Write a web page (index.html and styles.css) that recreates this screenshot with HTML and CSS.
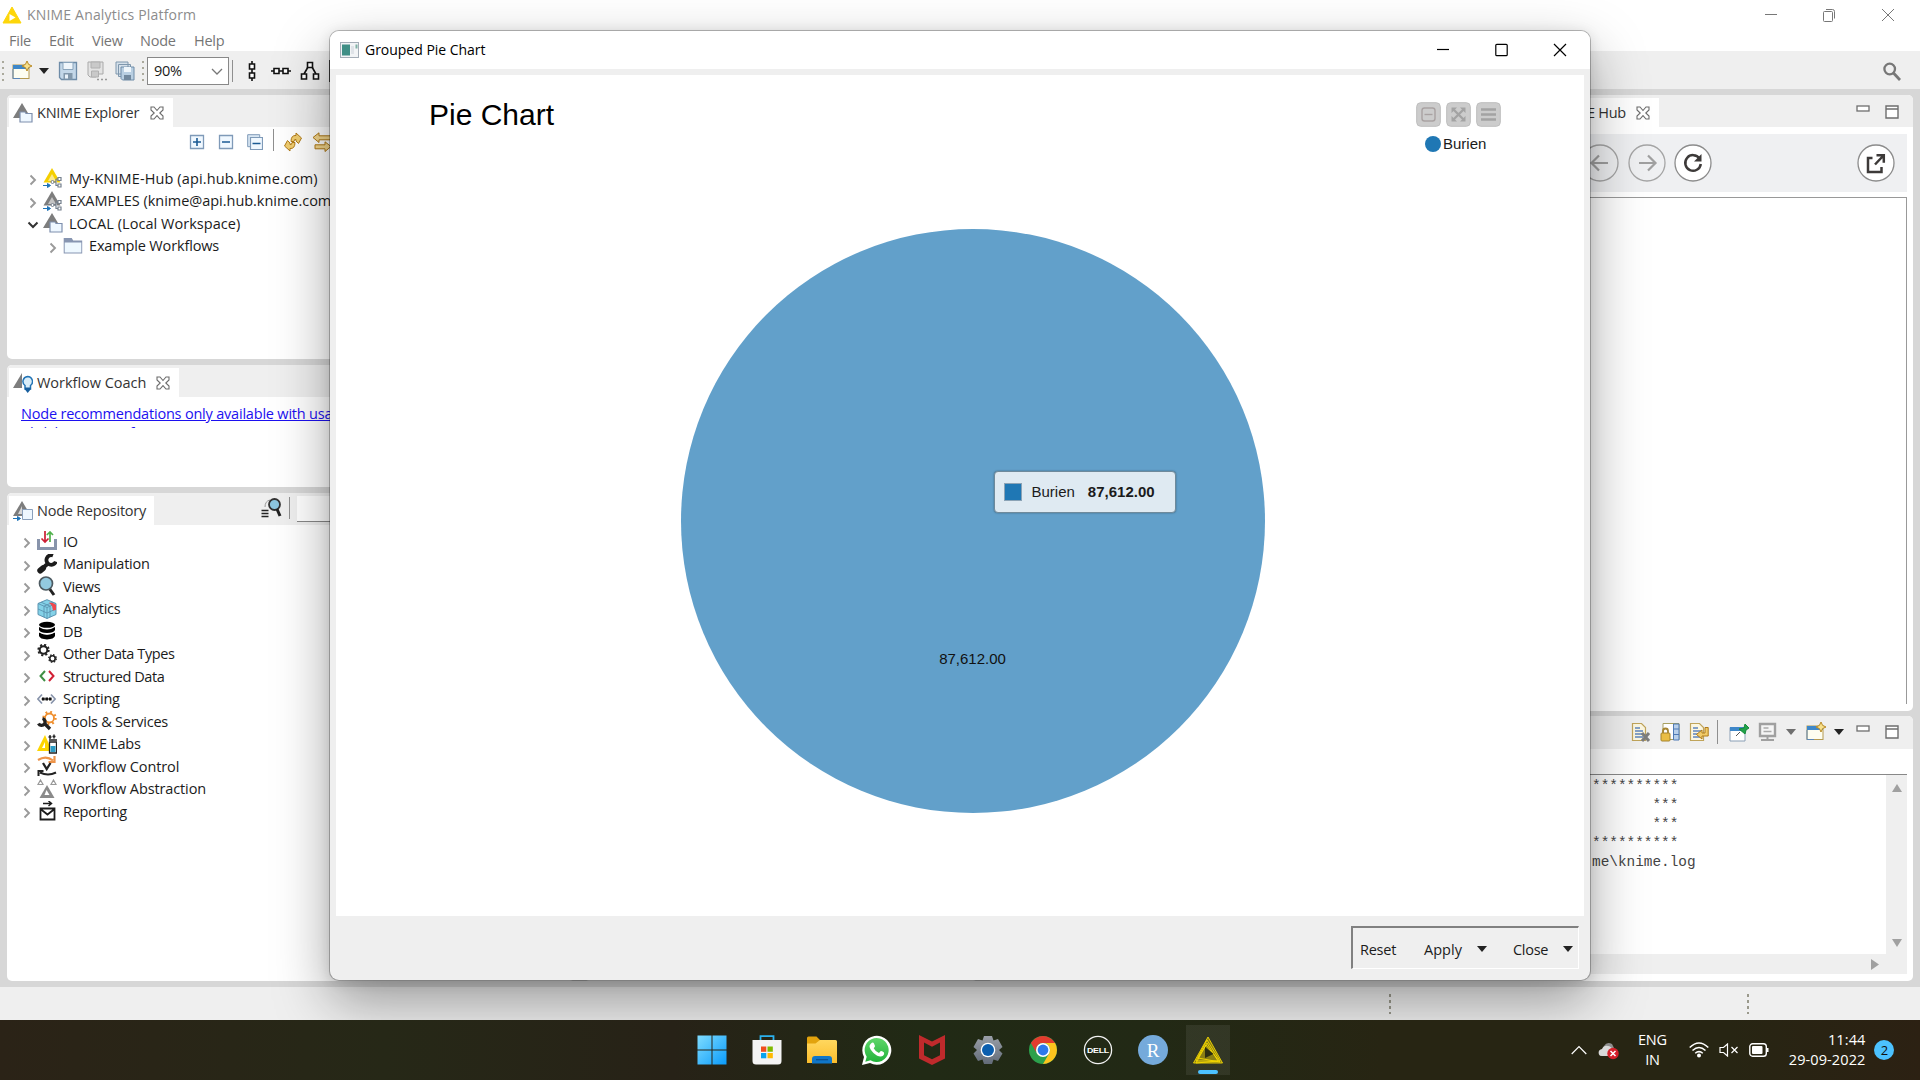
FILE: index.html
```html
<!DOCTYPE html>
<html lang="en">
<head>
<meta charset="utf-8">
<title>KNIME Analytics Platform</title>
<link rel="stylesheet" href="styles.css">
</head>
<body>
<svg class="defs" aria-hidden="true">
  <defs>
    <linearGradient id="gWin" x1="0" y1="0" x2="1" y2="1"><stop offset="0" stop-color="#7fdcff"/><stop offset="1" stop-color="#0a9bfb"/></linearGradient>
    <linearGradient id="gFolder" x1="0" y1="0" x2="0" y2="1"><stop offset="0" stop-color="#ffd75e"/><stop offset="1" stop-color="#fbbd2c"/></linearGradient>
    <linearGradient id="gWa" x1="0" y1="0" x2="0" y2="1"><stop offset="0" stop-color="#5fd66a"/><stop offset="1" stop-color="#22b33a"/></linearGradient>
    <linearGradient id="gGear" x1="0" y1="0" x2="0" y2="1"><stop offset="0" stop-color="#9a9fa8"/><stop offset="1" stop-color="#626b78"/></linearGradient>
    <symbol id="chev" viewBox="0 0 8 12"><path d="M1.500 1.500 6 6 1.500 10.500" fill="none" stroke="#9a9a9a" stroke-width="1.900"/></symbol>
    <symbol id="close" viewBox="0 0 14 14"><path d="M1 1h3l3 3.500L10 1h3v3L9.800 7 13 10v3h-3L7 9.600 4 13H1v-3l3.200-3L1 4z" fill="#fff" stroke="#6c6c6c" stroke-width="1.100"/></symbol>
    <symbol id="newwin" viewBox="0 0 20 20"><rect x="1" y="4" width="16" height="13.500" fill="#fdfdf0" stroke="#b49a50"/><path d="M1 4h16v4H1z" fill="#3e87c9"/><path d="M1 8v9.500h7" fill="none" stroke="#5c87b8"/><path d="M15 0l1.600 3.400L20 5l-3.400 1.600L15 10l-1.600-3.400L10 5l3.400-1.600z" fill="#f7e08c" stroke="#b98a25"/></symbol>
    <symbol id="disk" viewBox="0 0 20 20"><path d="M1.500 1.500h17v17H3.500l-2-2z" fill="#c3d7e8" stroke="#6e8ca8" stroke-width="1.300"/><path d="M5 1.500h10v7H5z" fill="#eff6fb" stroke="#8aa5bc"/><path d="M5.500 12h9v6.500h-9z" fill="#8298ab"/><path d="M7 13.500h3v4H7z" fill="#e9f2fa"/></symbol>
    <symbol id="knlocal" viewBox="0 0 20 20"><path d="M9 0 18 15H0z" fill="#7d7d7d"/><path d="M7 9h5l1 1.500h6V19H7z" fill="#eef7ff" stroke="#7e8fae" stroke-width="1.200"/></symbol>
    <symbol id="knhub" viewBox="0 0 20 20"><path d="M9 0 17.500 14.500H.5z"/><path d="M9 6l4 7H5z" fill="#fff" opacity=".55"/><path d="M0 17.500h5M4.500 15.500l3 2-3 2z" fill="#1e73b8" stroke="#1e73b8"/><path d="M9 14h4m2-4.500h3v3h-3zm0 6.500h3v3h-3zM13 11v6.500h2M13 11h2" fill="#fff" stroke="#75808d" stroke-width="1.200"/><circle cx="9.500" cy="14" r="1.500" fill="#fff" stroke="#75808d"/></symbol>
    <symbol id="tree-h" viewBox="0 0 20 20"><path d="M0 10h3M8 10h4M17 10h3" stroke="#111" stroke-width="1.600"/><path d="M3 7.500h5v5H3zM12 7.500h5v5h-5z" fill="#fff" stroke="#111" stroke-width="1.600"/></symbol>
    <symbol id="minview" viewBox="0 0 14 8"><rect x="1" y="1" width="12" height="5" fill="#fff" stroke="#6e6e6e" stroke-width="1.300"/></symbol>
    <symbol id="maxview" viewBox="0 0 14 14"><path d="M1 1h12v12H1zM1 4h12" fill="#fff" stroke="#6e6e6e" stroke-width="1.400"/></symbol>
    <symbol id="doc" viewBox="0 0 20 20"><path d="M1.500 1.500h9l4 4v13h-13z" fill="#fbf6e0" stroke="#c0a45a" stroke-width="1.200"/><path d="M4 6h5M4 9h8M4 12h8M4 15h8" stroke="#5d84bd" stroke-width="1.300"/></symbol>
  </defs>
</svg>

<div class="app">
  <header class="titlebar">
    <svg class="logo" viewBox="0 0 20 18"><path d="M10 1 19 17H1z" fill="#fdd60a" stroke="#fdd60a" stroke-linejoin="round"/><path d="M7.500 8l6 3.500-6 3.500z" fill="#fff"/></svg>
    <span class="app-name">KNIME Analytics Platform</span>
    <div class="win-btns">
      <svg viewBox="0 0 14 14"><path d="M1 6.500h12" stroke="#777" /></svg>
      <svg viewBox="0 0 14 14"><path d="M.5 4.500a1 1 0 0 1 1-1h7a1 1 0 0 1 1 1v8a1 1 0 0 1-1 1h-7a1 1 0 0 1-1-1zM3 1.500h6.500q2 0 2 2v7" fill="none" stroke="#777"/></svg>
      <svg viewBox="0 0 14 14"><path d="M1 1l12 12M13 1 1 13" stroke="#777"/></svg>
    </div>
  </header>
  <nav class="menu"><span>File</span><span>Edit</span><span>View</span><span>Node</span><span>Help</span></nav>

  <div class="toolbar">
    <i class="grip"></i>
    <svg class="i20 t-new"><use href="#newwin"/></svg>
    <svg class="t-drop" viewBox="0 0 10 6"><path d="M0 0h10L5 6z" fill="#222"/></svg>
    <svg class="i20 t-save"><use href="#disk"/></svg>
    <svg class="i20 t-saveas" viewBox="0 0 20 20"><path d="M1 1h15v12H9v3H3l-2-2z" fill="#e3e3e3" stroke="#a9a9a9"/><path d="M4 1h9v6H4zM4.500 10h7v6h-7z" fill="#c9c9c9" stroke="#b0b0b0"/><path d="M10 18.500h2m2 0h2m2 0h2" stroke="#999" stroke-width="1.500"/></svg>
    <svg class="i20 t-saveall" viewBox="0 0 20 20"><path d="M1 1h12v12H1zM3.500 3.500h12v12h-12z" fill="#d5e0ea" stroke="#7e97ad"/><path d="M6 6h13v13H7.500L6 17.500z" fill="#b9cfe2" stroke="#6e8ca8"/><path d="M9 6h7v5H9z" fill="#eff6fb"/><path d="M9 14h7v5H9z" fill="#72899e"/></svg>
    <i class="grip g2"></i>
    <div class="zoom">90%<svg viewBox="0 0 12 8"><path d="M1 1l5 5 5-5" fill="none" stroke="#777" stroke-width="1.300"/></svg></div>
    <i class="vline"></i>
    <svg class="i20 t-v" viewBox="0 0 20 20"><path d="M10 0v3M10 8v4M10 17v3" stroke="#111" stroke-width="1.600"/><path d="M7.500 3h5v5h-5zM7.500 12h5v5h-5z" fill="#fff" stroke="#111" stroke-width="1.600"/></svg>
    <svg class="i20 t-h"><use href="#tree-h"/></svg>
    <svg class="i20 t-t" viewBox="0 0 20 20"><path d="M8 6 4 13M12 6l4 7" stroke="#111" stroke-width="1.600"/><path d="M7.500 1.500h5v5h-5zM1.500 13h5v5h-5zM13.500 13h5v5h-5z" fill="#fff" stroke="#111" stroke-width="1.600"/></svg>
    <i class="vline dark"></i>
    <svg class="search" viewBox="0 0 18 19"><circle cx="6.700" cy="7" r="5.300" fill="none" stroke="#777" stroke-width="2.300"/><path d="M10.500 11l6.500 7" stroke="#777" stroke-width="2.800"/></svg>
  </div>

  <main class="workbench">
    <div class="left">
      <section class="panel explorer">
        <div class="tabs"><div class="tab"><svg class="i20"><use href="#knlocal"/></svg><span>KNIME Explorer</span><svg class="x"><use href="#close"/></svg></div></div>
        <div class="acts">
          <svg viewBox="0 0 16 16"><path d="M1.500 1.500h13v13h-13z" fill="#f0f8ff" stroke="#7f9ab8" stroke-width="1.300"/><path d="M4 8h8M8 4v8" stroke="#1c5b94" stroke-width="1.600"/></svg>
          <svg viewBox="0 0 16 16"><path d="M1.500 1.500h13v13h-13z" fill="#f0f8ff" stroke="#7f9ab8" stroke-width="1.300"/><path d="M4 8h8" stroke="#1c5b94" stroke-width="1.600"/></svg>
          <svg viewBox="0 0 16 16"><path d="M.7.7h12v12H.7z" fill="#d9e7f3" stroke="#7f9ab8"/><path d="M3.500 3.500h12v12h-12z" fill="#f0f8ff" stroke="#7f9ab8" stroke-width="1.200"/><path d="M5.500 9.500h8" stroke="#1c5b94" stroke-width="1.600"/></svg>
          <i class="vline"></i>
          <svg class="sync" viewBox="0 0 20 20"><path d="M8 9.500Q8 3 13 3.500V1l5.500 5-3 5.500L13 9v-1.500q-2-.5-2 2z" fill="#f0cd70" stroke="#b07a18" stroke-linejoin="round"/><path d="M12 10.500q0 6.500-5 6V19l-5.500-5 3-5.500L7 11v1.500q2 .5 2-2z" fill="#f0cd70" stroke="#b07a18" stroke-linejoin="round"/></svg>
          <svg class="link" viewBox="0 0 20 20"><path d="M1 5.500 7 .8v3h12v4H7v2.700zM19 14.500 13 9.800v3H3v4h10v2.700z" fill="#f4d78d" stroke="#b07a18" stroke-linejoin="round"/></svg>
        </div>
        <div class="tree">
          <div class="row"><svg class="ch"><use href="#chev"/></svg><svg class="i20 yellow"><use href="#knhub"/></svg><span class="t1">My-KNIME-Hub (api.hub.knime.com)</span></div>
          <div class="row"><svg class="ch"><use href="#chev"/></svg><svg class="i20 gray"><use href="#knhub"/></svg><span class="t2">EXAMPLES (knime@api.hub.knime.com)</span></div>
          <div class="row"><svg class="ch" viewBox="0 0 12 12"><path d="M1.500 3.500 6 8l4.500-4.500" fill="none" stroke="#333" stroke-width="2"/></svg><svg class="i20"><use href="#knlocal"/></svg><span class="t3">LOCAL (Local Workspace)</span></div>
          <div class="row sub"><svg class="ch"><use href="#chev"/></svg><svg class="i20" viewBox="0 0 20 20"><path d="M.7 17.500V2h8l1.500 2.500h9v13z" fill="#8795b1"/><path d="M1.700 6.500h16.600v10H1.700z" fill="#eef8ff"/></svg><span class="t4">Example Workflows</span></div>
        </div>
      </section>

      <section class="panel coach">
        <div class="tabs"><div class="tab"><svg class="i20" viewBox="0 0 20 20"><path d="M9 0v15H0z" fill="#7d7d7d"/><path d="M14.500 3.500a5 5 0 0 1 3 9V16h-5.500v-3.500a5 5 0 0 1 2.500-9z" fill="#d9edf9" stroke="#2374b5" stroke-width="1.500"/><path d="M12 14.500h5.500v2L14.700 20 12 16.500z" fill="#175f9f"/></svg><span>Workflow Coach</span><svg class="x"><use href="#close"/></svg></div></div>
        <div class="coach-text">Node recommendations only available with usage data<br>Click here to configure</div>
      </section>

      <section class="panel repo">
        <div class="tabs"><div class="tab"><svg class="i20" viewBox="0 0 20 20"><path d="M9 0 18 15H0z" fill="#7d7d7d"/><path d="M9 5v8H5z" fill="#fff" opacity=".7"/><path d="M9.500 8.500h10v10h-10z" fill="#eef7ff" stroke="#8aa0bc"/><path d="M0 17.500h5M4.500 15.500l3 2-3 2z" fill="#1e73b8" stroke="#1e73b8"/></svg><span>Node Repository</span></div>
          <div class="repo-tools"><svg class="find" viewBox="0 0 21 20"><path d="M4 9q0-6 5-7" stroke="#999" fill="none"/><circle cx="13.500" cy="6.500" r="5.500" fill="#8dc6df" stroke="#333" stroke-width="1.800"/><path d="M16 11l3 7" stroke="#222" stroke-width="3"/><path d="M.5 12.500h7M.5 15.500h7M.5 18.500h7" stroke="#222" stroke-width="1.700"/></svg><i class="vline"></i><div class="searchbox"></div></div>
        </div>
        <div class="tree">
          <div class="row"><svg class="ch"><use href="#chev"/></svg><svg class="i20" viewBox="0 0 20 20"><path d="M1.500 8v9.500h17V8" fill="none" stroke="#8894ab" stroke-width="3"/><path d="M8 0v10M4.500 7.500 8 11l3.500-3.500" fill="none" stroke="#cc1f35" stroke-width="1.700"/><path d="M13 11V1M9.800 4 13 1l3 3" fill="none" stroke="#4fb04b" stroke-width="1.700"/></svg><span>IO</span></div>
          <div class="row"><svg class="ch"><use href="#chev"/></svg><svg class="i20" viewBox="0 0 20 20"><path d="M16 1.500a4.800 4.800 0 1 0 2.800 6" fill="none" stroke="#1c1c1c" stroke-width="3.800"/><path d="M3.300 16.500 6 14.200" stroke="#1c1c1c" stroke-width="6" stroke-linecap="round"/><path d="M7 13l4-3.500" stroke="#1c1c1c" stroke-width="4"/></svg><span>Manipulation</span></div>
          <div class="row"><svg class="ch"><use href="#chev"/></svg><svg class="i20" viewBox="0 0 20 20"><path d="M12 12l5 7" stroke="#222" stroke-width="3"/><circle cx="9" cy="7.500" r="6.500" fill="#93cae0" stroke="#4d5a61" stroke-width="1.700"/></svg><span>Views</span></div>
          <div class="row"><svg class="ch"><use href="#chev"/></svg><svg class="i20" viewBox="0 0 20 20"><path d="M10 .7 19 4.500v11L10 19.500 1 15.500v-11z" fill="#84d2e8" stroke="#5a93b0"/><path d="M1 4.500l9 4 9-4M10 8.500v11M1 10l9 4 9-4M4 3.200l9 4v11M16 3.200l-9 4v11" fill="none" stroke="#5a93b0" stroke-width=".9"/><path d="M12 3.500l4 .5 3 2v5l-3 .5-1-4.500z" fill="#f0494e"/></svg><span>Analytics</span></div>
          <div class="row"><svg class="ch"><use href="#chev"/></svg><svg class="i20" viewBox="0 0 20 20"><ellipse cx="10" cy="3.800" rx="8" ry="3"/><path d="M2 6q8 5 16 0v3q-1 3-8 3T2 9zM2 11q8 5 16 0v4q-1 3-8 3.500Q3 18 2 15z"/><path d="M2 11q8 4.500 16 0" stroke="#fff" fill="none"/></svg><span>DB</span></div>
          <div class="row"><svg class="ch"><use href="#chev"/></svg><svg class="i20" viewBox="0 0 20 20"><circle cx="6.500" cy="6" r="3.800" fill="none" stroke="#222" stroke-width="2"/><circle cx="6.500" cy="6" r="5.300" fill="none" stroke="#222" stroke-width="1.800" stroke-dasharray="2.080 2.080"/><circle cx="15.500" cy="14.500" r="2.700" fill="none" stroke="#222" stroke-width="1.600"/><circle cx="15.500" cy="14.500" r="3.800" fill="none" stroke="#222" stroke-width="1.300" stroke-dasharray="1.500 1.500"/></svg><span class="tight">Other Data Types</span></div>
          <div class="row"><svg class="ch"><use href="#chev"/></svg><svg class="i20" viewBox="0 0 20 20"><path d="M8 5l-4.500 5L8 15" fill="none" stroke="#3f8f45" stroke-width="2"/><path d="M12 5l4.500 5-4.500 5" fill="none" stroke="#d22035" stroke-width="2"/></svg><span class="tight">Structured Data</span></div>
          <div class="row"><svg class="ch"><use href="#chev"/></svg><svg class="i20" viewBox="0 0 20 20"><path d="M5 5.500.9 10 5 14.500M14 5.500l4.100 4.500-4.100 4.500" fill="none" stroke="#8894ab" stroke-width="1.700"/><path d="M4.500 10h10" stroke="#333" stroke-width="1.200"/><path d="M5 10h2.500M8.500 10H11M12 10h2.500" stroke="#111" stroke-width="3"/></svg><span>Scripting</span></div>
          <div class="row"><svg class="ch"><use href="#chev"/></svg><svg class="i20" viewBox="0 0 20 20"><circle cx="12.500" cy="7" r="4.500" fill="#fff" stroke="#ef8f2f" stroke-width="1.800"/><circle cx="12.500" cy="7" r="6" fill="none" stroke="#ef8f2f" stroke-width="2.400" stroke-dasharray="1.800 2.910"/><path d="M5.500 7.500a3.500 3.500 0 1 1-4 5M8 13l5 5" fill="none" stroke="#222" stroke-width="3.300"/></svg><span>Tools &amp; Services</span></div>
          <div class="row"><svg class="ch"><use href="#chev"/></svg><svg class="i20" viewBox="0 0 20 20"><path d="M8 1 15 17H0z" fill="#fdd500"/><path d="M8 8v6H5z" fill="#fff"/><path d="M12.500 8h7v11h-7z" fill="#fff" stroke="#222" stroke-width="1.300"/><path d="M13.500 12h5v6h-5z" fill="#2b9bc4"/><path d="M12 6h8M13 1v4M17 .5v4M11.500 3h3M15.500 2.500h3" stroke="#222" stroke-width="1.400"/></svg><span>KNIME Labs</span></div>
          <div class="row"><svg class="ch"><use href="#chev"/></svg><svg class="i20" viewBox="0 0 20 20"><path d="M1 4q8-5 15 .5M17.500 0v6h-6" fill="none" stroke="#ed9348" stroke-width="2.200"/><path d="M19 16.500q-8 4-16 0M1.500 20v-5h5" fill="none" stroke="#222" stroke-width="2"/><path d="M6 7 9.700 13 13.500 7" fill="none" stroke="#222" stroke-width="2.300"/></svg><span class="wide">Workflow Control</span></div>
          <div class="row"><svg class="ch"><use href="#chev"/></svg><svg class="i20" viewBox="0 0 20 20"><path d="M3.500 1 6 5.500H1zM16.500 1 19 5.500h-5z" fill="#fff" stroke="#999" stroke-width="1.200"/><path d="M10 6l7.500 13h-15z" fill="#8a8a8a"/><path d="M9.500 11l3 5h-5z" fill="#fff"/></svg><span class="wide">Workflow Abstraction</span></div>
          <div class="row"><svg class="ch"><use href="#chev"/></svg><svg class="i20" viewBox="0 0 20 20"><path d="M3.500 7.500h14v11h-14zM3.500 8l7 5.500 7-5.500" fill="#fff" stroke="#1c1c1c" stroke-width="1.800"/><path d="M6 2.500h8M11.500 0l3 2.500-3 2.500" fill="none" stroke="#1c1c1c" stroke-width="1.500"/></svg><span>Reporting</span></div>
        </div>
      </section>
    </div>

    <div class="mid"><section class="panel"></section></div>

    <div class="right">
      <section class="panel hub">
        <div class="tabs"><div class="tab"><span>KNIME Hub</span><svg class="x"><use href="#close"/></svg></div><div class="view-btns"><svg class="mn"><use href="#minview"/></svg><svg class="mx"><use href="#maxview"/></svg></div></div>
        <div class="browser-bar">
          <svg viewBox="0 0 38 38"><circle cx="19" cy="19" r="18" fill="none" stroke="#a5a5a5" stroke-width="1.300"/><path d="M27 19H11M18 11.500 10.500 19l7.500 7.500" fill="none" stroke="#a0a0a0" stroke-width="2.200"/></svg>
          <svg viewBox="0 0 38 38"><circle cx="19" cy="19" r="18" fill="none" stroke="#a5a5a5" stroke-width="1.300"/><path d="M11 19h16M20 11.500l7.500 7.500-7.500 7.500" fill="none" stroke="#a0a0a0" stroke-width="2.200"/></svg>
          <svg viewBox="0 0 38 38"><circle cx="19" cy="19" r="18" fill="#fff" stroke="#8c8c8c" stroke-width="1.300"/><path d="M25.500 14.500A7.800 7.800 0 1 0 26.800 20" fill="none" stroke="#3d3a39" stroke-width="2.500"/><path d="M27.500 10v7.500H20z" fill="#3d3a39"/></svg>
          <svg class="ext" viewBox="0 0 38 38"><circle cx="19" cy="19" r="18" fill="#fff" stroke="#8c8c8c" stroke-width="1.300"/><path d="M15.500 14H11v14h13.500v-5" fill="none" stroke="#3d3a39" stroke-width="2.500"/><path d="M18 20.500l8.500-9M19.500 11.200h7.300v7.500" fill="none" stroke="#3d3a39" stroke-width="2.500"/></svg>
        </div>
        <div class="browser-view"></div>
      </section>

      <section class="panel console">
        <div class="con-tools">
          <svg viewBox="0 0 20 20"><use href="#doc"/><path d="M11 11l7 8M18 11l-7 8" stroke="#7d7d7d" stroke-width="3"/></svg>
          <svg viewBox="0 0 20 20"><path d="M3 1.500h16v16H3z" fill="#fff" stroke="#a8a060"/><path d="M13.500 2H19v16h-5.500z" fill="#b9d0ea" stroke="#4f7ab5"/><path d="M14 7h5M14 12.500h5" stroke="#4f7ab5"/><path d="M3 11V9q0-2.500 2.500-2.500T8 9v2" fill="none" stroke="#a5842f" stroke-width="1.800"/><rect x="1" y="11" width="9" height="8" rx="1" fill="#e9bd45" stroke="#a5842f"/></svg>
          <svg viewBox="0 0 20 20"><use href="#doc"/><path d="M16 5.500h3.200V14H13v3l-5.500-4.500L13 8v3h3z" fill="#f0cb6a" stroke="#b07a18"/></svg>
          <i class="vline"></i>
          <svg viewBox="0 0 20 20"><path d="M1 5.500h15V19H1z" fill="#fff" stroke="#8a9fb5"/><path d="M1 5h15v4H1z" fill="#3e87c9"/><path d="M7 14l4-4" stroke="#555"/><path d="M10 7l5-1 1-4 4 4-3 2-1 4z" fill="#21a349" stroke="#178a3a"/></svg>
          <svg viewBox="0 0 20 20"><path d="M2 2h15v12H2z" fill="#f5f5f5" stroke="#a0a0a0" stroke-width="2.400"/><path d="M5.500 6h5M5.500 9.500h8" stroke="#aaa" stroke-width="1.500"/><path d="M3 18h13M9.500 14v4" stroke="#a0a0a0" stroke-width="2" fill="none"/></svg>
          <svg class="dd" viewBox="0 0 10 6"><path d="M0 0h10L5 6z" fill="#6e6e6e"/></svg>
          <svg><use href="#newwin"/></svg>
          <svg class="dd" viewBox="0 0 10 6"><path d="M0 0h10L5 6z" fill="#222"/></svg>
          <svg class="mn"><use href="#minview"/></svg>
          <svg class="mx"><use href="#maxview"/></svg>
        </div>
        <div class="con-body">
<pre class="log">**********
       ***
       ***
**********
me\knime.log</pre>
          <div class="vscroll"><svg viewBox="0 0 10 8"><path d="M5 0l5 8H0z" fill="#a0a0a0"/></svg><svg viewBox="0 0 10 8"><path d="M0 0h10L5 8z" fill="#a0a0a0"/></svg></div>
          <div class="hscroll"><svg viewBox="0 0 8 11"><path d="M0 0l8 5.500L0 11z" fill="#a0a0a0"/></svg></div>
        </div>
      </section>
    </div>
  </main>

  <footer class="statusbar"><i class="dots d1"></i><i class="dots d2"></i></footer>

  <div class="taskbar">
    <div class="apps">
      <div class="app-i"><svg viewBox="0 0 30 30"><path d="M.5.5h14v14H.5zM15.500.5h14v14h-14zM.5 15.500h14v14H.5zM15.500 15.500h14v14h-14z" fill="url(#gWin)"/></svg></div>
      <div class="app-i"><svg viewBox="0 0 30 30"><path d="M8.500 6V1.200h13V6" fill="none" stroke="#2bb2ef" stroke-width="1.800"/><path d="M.5 5h29v21q0 3.500-3.500 3.500H4Q.5 29.500.5 26z" fill="#f4f4f4"/><path d="M9 11.500h5.300v5.300H9z" fill="#f04e1f"/><path d="M15.500 11.500h5.300v5.300h-5.300z" fill="#7fba00"/><path d="M9 18h5.300v5.300H9z" fill="#0aa4ef"/><path d="M15.500 18h5.300v5.300h-5.300z" fill="#ffb901"/></svg></div>
      <div class="app-i"><svg viewBox="0 0 30 30"><path d="M0 3q0-1.500 1.500-1.500h8L13 5H28v6H0z" fill="#e2a30d"/><path d="M0 8.500h8.500L13 5h15.500q1.500 0 1.500 1.500V28H0z" fill="url(#gFolder)"/><path d="M5 28.500V24q0-3 3-3h14q3 0 3 3v4.500z" fill="#1076c8"/><path d="M9 24.700h12" stroke="#0a4e8e" stroke-width="1.200"/></svg></div>
      <div class="app-i"><svg viewBox="0 0 30 30"><path d="M0 30l2-8A14.500 14.500 0 1 1 8 28z" fill="#fff"/><path d="M3.300 26.700l1.400-5A12 12 0 1 1 8.500 25.300z" fill="url(#gWa)"/><path d="M9 8.500q2-2 3 0l1 2.500q0 1-1.300 2.200 2 3.800 5.300 4.800l1.500-1.800q.8-.5 3.500 1.300.8 3-3 4-3 .5-7.500-3.500-4-4-4-7 .3-1.500 1.500-2.500z" fill="#fff"/></svg></div>
      <div class="app-i"><svg viewBox="0 0 30 30"><path d="M2 0l13 6.500L28 0v23.500L15 30 2 23.500zm5 7.500v12.700l8 4.100 8-4.100V7.500l-8 4.200z" fill="#bf2a2c" fill-rule="evenodd"/></svg></div>
      <div class="app-i"><svg viewBox="0 0 30 30"><path d="M11 1h8l1.500 4.500L25 4l4.500 8L26 15l3.500 3.500L25 26l-4.500-1.500L19 29h-8l-1.500-4.500L5 26 .5 18.500 4 15 .5 12 5 4l4.500 1.500z" fill="url(#gGear)"/><circle cx="15" cy="15" r="7.300" fill="#fff"/><circle cx="15" cy="15" r="6" fill="#0c5eae"/></svg></div>
      <div class="app-i"><svg viewBox="0 0 30 30"><circle cx="15" cy="15" r="14" fill="#2ca04c"/><path d="M2.900 8a14 14 0 0 1 24.200 0H15a7 7 0 0 0-6.100 10.500z" fill="#e33b2e"/><path d="M27.100 8A14 14 0 0 1 15 29l6.100-10.500A7 7 0 0 0 15 8z" fill="#fcc31e"/><circle cx="15" cy="15" r="7" fill="#fff"/><circle cx="15" cy="15" r="5.400" fill="#2d78ea"/></svg></div>
      <div class="app-i"><svg viewBox="0 0 30 30"><circle cx="15" cy="15" r="13.600" fill="none" stroke="#f2f2f2" stroke-width="1.300"/><text x="15" y="18.200" class="dell" textLength="22" lengthAdjust="spacingAndGlyphs">DELL</text></svg></div>
      <div class="app-i"><svg viewBox="0 0 30 30"><circle cx="15" cy="15" r="15" fill="#75aadb"/><text x="15" y="21.500" class="rr">R</text></svg></div>
      <div class="app-i active"><svg viewBox="0 0 30 30"><path d="M15 2 29.500 28H.5z" fill="#f5d800" fill-opacity=".45"/><path d="M15 2 29.500 28H.5zM14 5l13 21H3zM14 8l11 18-22 2zM13 10l14 17L5 23z" fill="none" stroke="#f5d800" stroke-width=".9"/><path d="M12 12v11l8.500-4z" fill="#2b2e12"/></svg></div>
    </div>
    <div class="tray">
      <svg class="up" viewBox="0 0 16 10"><path d="M.7 9 8 1.500 15.300 9" fill="none" stroke="#fff" stroke-width="1.200"/></svg>
      <svg class="cloud" viewBox="0 0 22 20"><path d="M6 5q3-5 8-2l2 4H5z" fill="#8e8e8e"/><path d="M1 13.500Q-.5 9 4 8q2-4 6-3 3 0 4.500 3.500L16 15H4q-2.500 0-3-1.500z" fill="#d9d9d9"/><circle cx="15" cy="12.500" r="5.700" fill="#d4202a"/><path d="M12.500 10l5 5M17.500 10l-5 5" stroke="#fff" stroke-width="1.500"/></svg>
      <div class="lang">ENG<br>IN</div>
      <svg class="wifi" viewBox="0 0 20 16"><path d="M.7 5.500q9.300-9 18.600 0M3.500 8.500q6.500-6 13 0M6.200 11.300q3.800-3.300 7.600 0" fill="none" stroke="#fff" stroke-width="1.500"/><circle cx="10" cy="13.500" r="2" fill="#fff"/></svg>
      <svg class="mute" viewBox="0 0 20 14"><path d="M1 4.500h3.500L8.500 1v12L4.500 9.500H1z" fill="none" stroke="#fff" stroke-width="1.200"/><path d="M12.500 4l6 6M18.500 4l-6 6" stroke="#fff" stroke-width="1.200"/></svg>
      <svg class="batt" viewBox="0 0 20 14"><rect x=".8" y=".8" width="16.500" height="12.400" rx="2.800" fill="none" stroke="#fff" stroke-width="1.400"/><rect x="3" y="3" width="10.500" height="8" rx="1" fill="#fff"/><path d="M18 5h1.500v4H18z" fill="#fff"/></svg>
      <div class="clock"><span class="time">11:44</span><span>29-09-2022</span></div>
      <div class="badge">2</div>
    </div>
  </div>
</div>

<div class="dialog">
  <div class="dlg-title">
    <svg class="dlg-icon" viewBox="0 0 19 16"><rect x=".5" y=".5" width="18" height="15" fill="#f2f4f6" stroke="#a4adb7"/><path d="M2 2.500h8v11H2z" fill="#3f8f86"/><path d="M11 4h3v8h-3z" fill="#dfe3e8"/><path d="M15.500 2.500h2v4h-2z" fill="#7fb0a5"/></svg>
    <span>Grouped Pie Chart</span>
    <div class="dlg-btns">
      <svg viewBox="0 0 14 14"><path d="M1 6.500h12" stroke="#000" stroke-width="1.200"/></svg>
      <svg viewBox="0 0 14 14"><rect x=".8" y="1.300" width="11.400" height="11.400" rx="1" fill="none" stroke="#000" stroke-width="1.200"/></svg>
      <svg viewBox="0 0 14 14"><path d="M1 1l12 12M13 1 1 13" stroke="#000" stroke-width="1.200"/></svg>
    </div>
  </div>
  <div class="dlg-body">
    <div class="chart-head">
      <h1>Pie Chart</h1>
      <div class="chart-side">
        <div class="chart-btns">
          <svg viewBox="0 0 25 25"><rect x=".7" y=".7" width="23.600" height="23.600" rx="4" fill="#ccc" stroke="#bdbdbd"/><rect x="6" y="6" width="13" height="13" rx="2.500" fill="none" stroke="#a9a2a2" stroke-width="1.400"/><path d="M8.500 12.500h8" stroke="#a9a2a2" stroke-width="1.400"/></svg>
          <svg viewBox="0 0 25 25"><rect x=".7" y=".7" width="23.600" height="23.600" rx="4" fill="#ccc" stroke="#bdbdbd"/><path d="M7 7l11 11M18 7 7 18" stroke="#a3a3a3" stroke-width="2.400"/><path d="M5.500 5.500h5.500l-5.500 5.500zM19.500 5.500v5.500L14 5.500zM5.500 19.500V14l5.500 5.500zM19.500 19.500H14l5.500-5.500z" fill="#a3a3a3"/></svg>
          <svg viewBox="0 0 25 25"><rect x=".7" y=".7" width="23.600" height="23.600" rx="4" fill="#ccc" stroke="#bdbdbd"/><path d="M5 7.500h15M5 12.500h15M5 17.500h15" stroke="#a3a3a3" stroke-width="2.300"/></svg>
        </div>
        <div class="legend"><i></i>Burien</div>
      </div>
    </div>
    <div class="pie-area">
      <div class="pie"><span class="pie-label">87,612.00</span>
        <div class="tip"><i></i><span>Burien</span><b>87,612.00</b></div>
      </div>
    </div>
  </div>
  <div class="dlg-foot">
    <div class="foot-box"><span>Reset</span><span class="ap">Apply</span><svg viewBox="0 0 10 6"><path d="M0 0h10L5 6z" fill="#222"/></svg><span class="cl">Close</span><svg class="s2" viewBox="0 0 10 6"><path d="M0 0h10L5 6z" fill="#222"/></svg></div>
  </div>
</div>
</body>
</html>
```
FILE: styles.css
```css
* { box-sizing: border-box; }
body { margin: 0; width: 1920px; height: 1080px; overflow: hidden; position: relative; background: #fff; font-family: "Open Sans", "Noto Sans", sans-serif; font-size: 14.5px; letter-spacing: -0.25px; color: #1b1b1b; }
svg { display: block; flex: none; }
.defs { position: absolute; width: 0; height: 0; }
.i20 { width: 20px; height: 20px; }
span { white-space: nowrap; }

.app { width: 1920px; height: 1080px; display: flex; flex-direction: column; }
.titlebar { height: 30px; flex: none; display: flex; align-items: center; padding-left: 2px; color: #8c8c8c; }
.logo { width: 20px; height: 18px; }
.app-name { margin: -2px 0 0 5px; font-size: 14px; letter-spacing: 0.18px; }
.win-btns { margin-left: auto; display: flex; gap: 44.500px; margin-right: 25px; }
.win-btns svg { width: 14px; height: 14px; }
.menu { height: 21px; flex: none; display: flex; align-items: center; color: #757575; padding: 0 0 0 9px; }
.menu span:nth-child(1) { width: 40px; }
.menu span:nth-child(2) { width: 43px; }
.menu span:nth-child(3) { width: 48px; }
.menu span:nth-child(4) { width: 54px; }

.toolbar { height: 38px; flex: none; background: #efefef; display: flex; align-items: center; padding: 2px 0 0 2px; }
.grip { width: 2px; height: 20px; background: repeating-linear-gradient(#aaa99c 0 2px, transparent 2px 6px); }
.g2 { margin-left: 7px; }
.t-new { margin-left: 8px; }
.t-drop { width: 10px; height: 6px; margin-left: 7px; }
.t-save { margin-left: 9px; }
.t-saveas { margin-left: 9px; }
.t-saveall { margin-left: 8px; }
.zoom { width: 82px; height: 28px; margin-left: 3px; border: 1px solid #888; background: #fff; display: flex; align-items: center; justify-content: space-between; padding: 0 5px 2px 6px; }
.zoom svg { width: 12px; height: 8px; margin-top: 3px; }
.vline { width: 1px; height: 22px; background: #8f8f8f; flex: none; }
.toolbar .vline { margin-left: 3px; }
.t-v { margin-left: 9px; }
.t-h { margin-left: 9px; }
.t-t { margin-left: 9px; }
.toolbar .vline.dark { width: 3px; margin-left: 9px; background: #444; }
.search { width: 18px; height: 19px; margin-left: auto; margin-right: 19px; }

.workbench { flex: 1; min-height: 0; background: #d7d7d7; padding: 6px 7px 6px; display: flex; gap: 9px; }
.left, .mid, .right { display: flex; flex-direction: column; }
.left { width: 568px; gap: 6px; }
.mid { width: 394px; }
.mid .panel { flex: 1; }
.right { flex: 1; gap: 5px; }
.panel { background: #fff; border-radius: 5px; overflow: hidden; display: flex; flex-direction: column; }
.explorer { height: 264px; }
.coach { height: 122px; }
.repo { flex: 1; }
.tabs { height: 32px; flex: none; background: #efefef; display: flex; padding: 3px 0 0 2px; }
.tab { background: #fff; display: flex; align-items: center; padding: 0 9px 0 4px; height: 29px; }
.tab span { margin: -1px 0 0 4px; color: #333; }
.tab .x { width: 14px; height: 14px; margin-left: auto; }
.explorer .tab { width: 164px; }
.coach .tab { width: 170px; }
.coach .tab span { letter-spacing: -0.02px; }
.repo .tab { width: 145px; padding-right: 0; }
.acts { height: 31px; display: flex; align-items: center; padding: 0 0 2px 182px; }
.acts svg { width: 16px; height: 16px; margin-right: 13px; }
.acts .vline { margin: -3px 9px 0 -3px; }
.acts .sync, .acts .link { width: 20px; height: 20px; margin-right: 9px; }
.tree { display: flex; flex-direction: column; }
.row { height: 22.500px; display: flex; align-items: center; }
.ch { width: 8px; height: 12px; flex: none; margin-top: 4px; }
.explorer .tree { padding: 9px 0 0 20px; }
.explorer .row .ch { width: 12px; }
.explorer .row .i20 { margin-left: 4px; }
.explorer .row span { margin-left: 6px; }
.explorer .sub { padding-left: 20px; }
.yellow { fill: #f5cf00; }
.gray { fill: #7d7d7d; }
.t1 { letter-spacing: 0.12px; }
.t2 { letter-spacing: -0.03px; }
.t3 { letter-spacing: 0.04px; }
.t4 { letter-spacing: -0.15px; }
.coach-text { margin: 7px 0 0 14px; line-height: 19px; height: 24px; overflow: hidden; color: #1c10f0; text-decoration: underline; white-space: nowrap; letter-spacing: -0.2px; }
.repo-tools { display: flex; align-items: center; margin: -3px 0 0 107px; height: 29px; }
.find { width: 21px; height: 20px; }
.repo-tools .vline { margin: 0 7px 0 7px; }
.searchbox { width: 250px; height: 26px; margin-top: 2px; background: #fff; border-bottom: 1px solid #888; }
.repo .tree { padding: 5px 0 0 16px; }
.repo .row .i20 { margin-left: 6px; }
.repo .row span { margin-left: 6px; }
.repo .row .tight { letter-spacing: -0.4px; }
.repo .row .wide { letter-spacing: -0.12px; }

.hub { height: 616px; }
.console { flex: 1; }
.hub .tabs { padding-left: 0; }
.hub .tab { width: 672px; justify-content: flex-end; }
.hub .tab .x { margin-left: 10px; }
.view-btns { margin-left: auto; display: flex; padding: 7px 14px 0 0; }
.view-btns .mx { margin-left: 15px; }
.mn { width: 14px; height: 8px; }
.mx { width: 14px; height: 14px; }
.browser-bar { height: 58px; flex: none; margin: 7px 6px 0; background: #eff0f2; display: flex; align-items: center; padding-left: 588px; gap: 8.500px; }
.browser-bar svg { width: 38px; height: 38px; }
.browser-bar .ext { margin-left: auto; margin-right: 12px; }
.browser-view { flex: 1; margin: 5px 6px 7px; border: solid #999; border-width: 1px 1px 0; }

.con-tools { height: 33px; flex: none; background: #efefef; display: flex; align-items: center; justify-content: flex-end; padding: 0 14px 2px 0; }
.con-tools svg { width: 20px; height: 20px; margin-right: 9px; }
.con-tools .vline { height: 24px; margin: 0 11px 0 -1px; }
.con-tools svg.dd { width: 10px; height: 6px; margin: 0 10px 0 -1px; }
.con-tools svg.mn { width: 14px; height: 8px; margin: -6px 15px 0 2px; }
.con-tools svg.mx { width: 14px; height: 14px; margin: 0; }
.con-body { flex: 1; margin: 25px 6px 7px; border-top: 1px solid #888; display: grid; grid-template: 1fr 20px / 1fr 21px; }
.log { margin: 0; padding: 2px 0 0 599px; font: 14.400px/18.900px "Liberation Mono", monospace; letter-spacing: 0; color: #444; }
.vscroll { background: #efefef; display: flex; flex-direction: column; justify-content: space-between; align-items: center; padding: 9px 0 7px; }
.vscroll svg { width: 10px; height: 8px; }
.hscroll { grid-column: 1 / 3; background: #efefef; display: flex; align-items: center; justify-content: flex-end; padding-right: 28px; }
.hscroll svg { width: 8px; height: 11px; }

.statusbar { height: 33px; flex: none; background: #efefef; display: flex; align-items: center; }
.dots { width: 2px; height: 20px; background: repeating-linear-gradient(#9a998c 0 3px, transparent 3px 6px); }
.d1 { margin-left: 1389px; }
.d2 { margin-left: 356px; }

.taskbar { height: 60px; flex: none; background: linear-gradient(90deg, #2b2317 0, #262817 20%, #272217 35%, #212a15 48%, #222915 60%, #272513 72%, #272513 90%, #2c2113 100%); display: flex; align-items: center; color: #fff; position: relative; z-index: 3; }
.apps { display: flex; margin-left: 684.500px; }
.app-i { width: 55.100px; height: 60px; display: flex; align-items: center; justify-content: center; }
.app-i svg { width: 30px; height: 30px; }
.app-i.active { position: relative; background: linear-gradient(rgba(255,255,255,.07), rgba(255,255,255,.07)) center / 44px 50px no-repeat; border-radius: 5px; }
.app-i.active::after { content: ""; position: absolute; left: 18px; bottom: 6px; width: 20px; height: 4px; border-radius: 2px; background: #4cc2ff; }
.dell { font: bold 8px "Liberation Sans", sans-serif; fill: #fff; text-anchor: middle; }
.rr { font: 19px "Liberation Serif", serif; fill: #fff; text-anchor: middle; }
.tray { flex: 1; display: flex; align-items: center; padding-left: 336px; }
.up { width: 16px; height: 10px; }
.cloud { width: 22px; height: 20px; margin: 2px 0 0 11px; }
.lang { width: 60px; margin-left: 2px; text-align: center; line-height: 20px; }
.wifi { width: 20px; height: 16px; margin-left: 7px; }
.mute { width: 20px; height: 14px; margin-left: 10px; }
.batt { width: 20px; height: 14px; margin-left: 10px; }
.clock { margin-left: 16px; width: 80px; display: flex; flex-direction: column; align-items: flex-end; line-height: 20px; letter-spacing: 0.1px; }
.badge { width: 20px; height: 20px; margin-left: 9px; border-radius: 50%; background: #4cc2ff; color: #111; text-align: center; line-height: 20px; font-size: 13px; }

.dialog { position: absolute; left: 330px; top: 31px; width: 1260px; height: 949px; border-radius: 9px; background: #efefef; display: flex; flex-direction: column; box-shadow: 0 0 0 1px rgba(0,0,0,.25), 0 2px 14px rgba(0,0,0,.12), 0 22px 56px rgba(0,0,0,.36); z-index: 2; }
.dlg-title { height: 38px; flex: none; background: #fff; border-radius: 9px 9px 0 0; display: flex; align-items: center; padding-left: 10px; font-size: 14px; letter-spacing: -0.02px; color: #000; }
.dlg-title span { margin-top: -1px; }
.dlg-icon { width: 19px; height: 16px; margin-right: 6px; }
.dlg-btns { margin-left: auto; margin-right: 23px; display: flex; gap: 44.500px; }
.dlg-btns svg { width: 14px; height: 14px; }
.dlg-body { height: 841px; margin: 6px 6px 0; background: #fff; font-family: "Liberation Sans", Arial, sans-serif; letter-spacing: 0; font-size: 15px; display: flex; flex-direction: column; }
.chart-head { height: 92px; flex: none; display: flex; justify-content: space-between; padding: 27px 83px 0 93px; }
h1 { margin: -4px 0 0; font-size: 30px; line-height: 34px; font-weight: normal; color: #000; }
.chart-btns { display: flex; gap: 5px; }
.chart-btns svg { width: 25px; height: 25px; }
.legend { display: flex; align-items: center; margin: 8px 0 0 9px; line-height: 17px; }
.legend i { width: 16px; height: 16px; border-radius: 50%; background: #1f77b4; margin-right: 2px; }
.pie-area { display: flex; justify-content: center; padding-top: 62px; padding-left: 25px; }
.pie { position: relative; width: 584px; height: 584px; border-radius: 50%; background: #62a0ca; display: flex; justify-content: center; align-items: flex-start; padding-top: 421px; }
.pie-label { line-height: 17px; color: #111; }
.tip { position: absolute; left: 313px; top: 242px; width: 182px; height: 42px; border: 1px solid #6f8a9b; border-radius: 4px; background: #dfeaf2; box-shadow: 0 0 2px rgba(0,0,0,.4); display: flex; align-items: center; padding-left: 9px; }
.tip i { width: 18px; height: 18px; border: 1px solid #8ba3b6; background: #1f77b4; }
.tip span { margin: -1px 0 0 10px; }
.tip b { margin: -1px 0 0 13px; }
.dlg-foot { flex: 1; display: flex; justify-content: flex-end; padding: 10px 11px 11px; }
.foot-box { width: 228px; border: solid #808080; border-width: 2px 1px 1px 2px; border-right-color: #fff; border-bottom-color: #fff; display: flex; align-items: center; padding: 3px 0 0 7px; }
.ap { margin-left: 28px; letter-spacing: 0; }
.cl { margin-left: 26px; }
.foot-box svg { width: 10px; height: 6px; margin-left: 15px; margin-top: -2px; }
```
